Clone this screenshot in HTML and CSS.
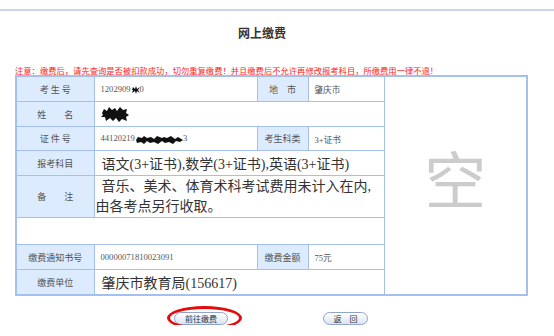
FILE: index.html
```html
<!DOCTYPE html>
<html>

<head>
    <meta charset="utf-8">
    <meta name="viewport" content="width=device-width, initial-scale=1">
    <link rel="stylesheet" href="styles.css">
</head>

<body>
    <div class="page">
        <h2 class="title">网上缴费</h2>
        <div class="notice">注意：缴费后，请先查询是否被扣款成功，切勿重复缴费！并且缴费后不允许再修改报考科目，所缴费用一律不退！</div>

        <table class="info">
            <colgroup>
                <col class="c-lbl">
                <col class="c-val">
                <col class="c-lbl2">
                <col class="c-val2">
                <col class="c-photo">
            </colgroup>
            <tr class="row">
                <td class="lbl">考 生 号</td>
                <td class="val">1202909<svg class="blot" width="9" height="8" viewBox="0 0 9 8"><path d="M1 4 L2 1 L4 3 L5 0 L6 3 L9 1 L7 4 L9 7 L6 5 L5 8 L4 5 L1 7 L2 4 Z" /></svg>0</td>
                <td class="lbl">地　市</td>
                <td class="val">肇庆市</td>
                <td class="photo" rowspan="8">空</td>
            </tr>
            <tr class="row">
                <td class="lbl">姓　　名</td>
                <td class="val" colspan="3"><svg class="blot blot-name" width="28" height="15" viewBox="0 0 28 15"><path d="M1 6 L3 2 L6 4 L8 0 L11 3 L14 1 L16 4 L19 0 L22 3 L26 2 L25 6 L28 8 L25 10 L26 14 L21 12 L18 15 L15 11 L12 14 L9 11 L5 14 L4 10 L0 10 L2 8 Z" /></svg></td>
            </tr>
            <tr class="row-s">
                <td class="lbl">证 件 号</td>
                <td class="val">44120219<svg class="blot" width="48" height="8" viewBox="0 0 48 8"><path d="M1 4 L3 1 L7 2 L9 0 L12 2 L16 1 L19 3 L22 0 L27 2 L29 1 L32 2 L36 0 L40 3 L43 1 L48 4 L45 6 L41 5 L38 8 L34 6 L30 7 L27 5 L23 8 L19 6 L15 7 L12 5 L9 8 L6 6 L2 7 Z" /></svg>3</td>
                <td class="lbl">考生科类</td>
                <td class="val">3+证书</td>
            </tr>
            <tr class="row">
                <td class="lbl">报考科目</td>
                <td class="big" colspan="3">语文(3+证书),数学(3+证书),英语(3+证书)</td>
            </tr>
            <tr class="row-note">
                <td class="lbl">备　　注</td>
                <td class="big note" colspan="3">音乐、美术、体育术科考试费用未计入在内,<br>由各考点另行收取。</td>
            </tr>
            <tr class="row-empty">
                <td class="blank" colspan="4"></td>
            </tr>
            <tr class="row">
                <td class="lbl">缴费通知书号</td>
                <td class="val">00000071810023091</td>
                <td class="lbl">缴费金额</td>
                <td class="val">75元</td>
            </tr>
            <tr class="row">
                <td class="lbl">缴费单位</td>
                <td class="big" colspan="3">肇庆市教育局(156617)</td>
            </tr>
        </table>

        <div class="actions">
            <span class="btn-wrap">
                <input type="button" class="btn btn-pay" value="前往缴费">
                <span class="circle"></span>
            </span>
            <input type="button" class="btn btn-back" value="返　回">
        </div>
    </div>
</body>

</html>
```

FILE: styles.css
```css
body {
    margin: 0;
    font-family: "Noto Sans CJK SC", sans-serif;
    background-color: #fff;
}

.page {
    margin-top: 9px;
    border-top: 2px solid #c9d6ee;
}

.title {
    margin: 12px 0 0 0;
    height: 20px;
    line-height: 20px;
    padding-right: 30px;
    text-align: center;
    font-size: 12px;
    font-weight: bold;
    color: #333;
}

.notice {
    margin: 22px 0 0 15px;
    height: 10px;
    line-height: 10px;
    font-size: 8.3px;
    color: #f22;
}

.info {
    margin-left: 15px;
    width: 511px;
    table-layout: fixed;
    border-collapse: collapse;
    border: 2px solid #a4bff0;
}

.c-lbl { width: 78px; }
.c-val { width: 163px; }
.c-lbl2 { width: 51px; }
.c-val2 { width: 76px; }
.c-photo { width: 143px; }

.info td {
    border: 1px solid #a4bff0;
    padding: 0;
    vertical-align: middle;
    white-space: nowrap;
}

.row td { height: 24px; }
.row-s td { height: 23px; }
.row-note td { height: 41px; }
.row-empty td { height: 26px; }

.lbl {
    background-color: #dcebfd;
    text-align: center;
    font-size: 9px;
    color: #555;
}

.val {
    padding-left: 6px !important;
    font-family: "Liberation Serif", "Noto Sans CJK SC", serif;
    font-size: 8.6px;
    color: #555;
}

.big {
    padding-left: 7px !important;
    font-family: "Liberation Serif", "Noto Sans CJK SC", serif;
    font-size: 14px;
    color: #333;
}

.note {
    padding-left: 1px !important;
    text-indent: 6px;
    line-height: 20px;
}

.blank {
    background-color: #fff;
}

.photo {
    text-align: center;
    font-size: 62px;
    color: #cccccc;
    padding-bottom: 18px !important;
}

.blot {
    fill: #111;
    vertical-align: middle;
}

.actions {
    display: flex;
    margin: 16px 0 0 174px;
    gap: 95px;
}

.btn-wrap {
    position: relative;
    display: block;
}

.btn {
    box-sizing: border-box;
    height: 13px;
    padding: 0;
    border: 1px solid #8fa4c6;
    border-radius: 7px;
    background: linear-gradient(#ffffff, #dbe4f2);
    font-family: "Noto Sans CJK SC", sans-serif;
    font-size: 8px;
    line-height: 11px;
    color: #333;
    display: block;
}

.btn-pay { width: 54px; }
.btn-back { width: 45px; }

.circle {
    position: absolute;
    left: -7px;
    top: -6px;
    width: 75px;
    height: 24px;
    box-sizing: border-box;
    border: 3px solid #e30b0b;
    border-radius: 50%;
}
```
